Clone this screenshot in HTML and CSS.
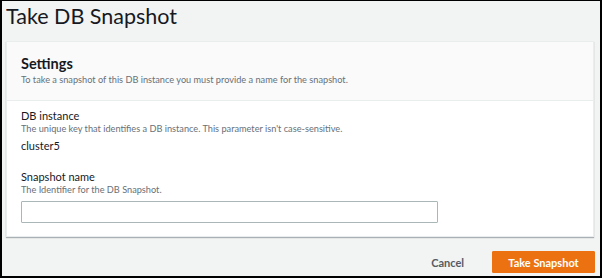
FILE: index.html
```html
<!doctype html>
<html lang="en">
<head>
    <meta charset="utf-8">
    <title>Take DB Snapshot</title>
    <link rel="stylesheet" href="styles.css">
</head>
<body>
    <div class="frame">
        <h1 class="page-title">Take DB Snapshot</h1>

        <div class="panel">
            <div class="panel-head">
                <h2>Settings</h2>
                <p class="hint">To take a snapshot of this DB instance you must provide a name for the snapshot.</p>
            </div>
            <div class="panel-body">
                <div class="field">
                    <div class="label">DB instance</div>
                    <div class="hint">The unique key that identifies a DB instance. This parameter isn't case-sensitive.</div>
                    <div class="value">cluster5</div>
                </div>
                <div class="field">
                    <div class="label">Snapshot name</div>
                    <div class="hint">The Identifier for the DB Snapshot.</div>
                    <input type="text" class="text-input">
                </div>
            </div>
        </div>

        <div class="actions">
            <button class="btn btn-link">Cancel</button>
            <button class="btn btn-primary">Take Snapshot</button>
        </div>
    </div>
</body>
</html>
```

FILE: styles.css
```css
html, body {
    margin: 0;
    padding: 0;
}
body {
    font-family: Lato, "Open Sans", "Liberation Sans", sans-serif;
    color: #16191f;
}
.frame {
    box-sizing: border-box;
    width: 602px;
    height: 278px;
    background-color: #f2f3f3;
    border-style: solid;
    border-color: #000;
    border-width: 1px 2px 2px 2px;
    padding: 0 4px 0 4px;
}
.page-title {
    margin: 0;
    height: 40px;
    font-size: 21.5px;
    font-weight: 400;
    line-height: 31px;
}
.panel {
    background-color: #fff;
    border: 1px solid #eaeded;
    box-shadow: 0 1px 1px 0 rgba(0, 28, 36, 0.3);
    margin-right: 2px;
}
.panel-head {
    background-color: #fafafa;
    border-bottom: 1px solid #eaeded;
    padding: 11px 14px 11px 14px;
    height: 36px;
}
.panel-head h2 {
    margin: 0;
    font-size: 14.5px;
    font-weight: 700;
    line-height: 21px;
}
.hint {
    margin: 0;
    font-size: 9.2px;
    line-height: 12px;
    color: #687078;
}
.panel-body {
    padding: 8px 14px 13px 14px;
}
.field + .field {
    margin-top: 17px;
}
.label {
    font-size: 11px;
    line-height: 14px;
    color: #16191f;
}
.value {
    margin-top: 4px;
    font-size: 11px;
    line-height: 14px;
}
.text-input {
    display: block;
    box-sizing: border-box;
    width: 417px;
    height: 22px;
    margin-top: 5px;
    border: 1px solid #aab7b8;
    border-radius: 1px;
    background: #fff;
}
.actions {
    display: flex;
    justify-content: flex-end;
    align-items: center;
    gap: 20px;
    margin-top: 14px;
    margin-right: 1px;
}
.btn {
    font-family: inherit;
    font-size: 11px;
    font-weight: 700;
    border: 0;
    height: 22px;
    cursor: pointer;
}
.btn-link {
    background: none;
    color: #545b64;
    padding: 0 8px;
}
.btn-primary {
    background-color: #ec7211;
    color: #fff;
    border: 1px solid #ec7211;
    width: 103px;
    border-radius: 1px;
}
```
